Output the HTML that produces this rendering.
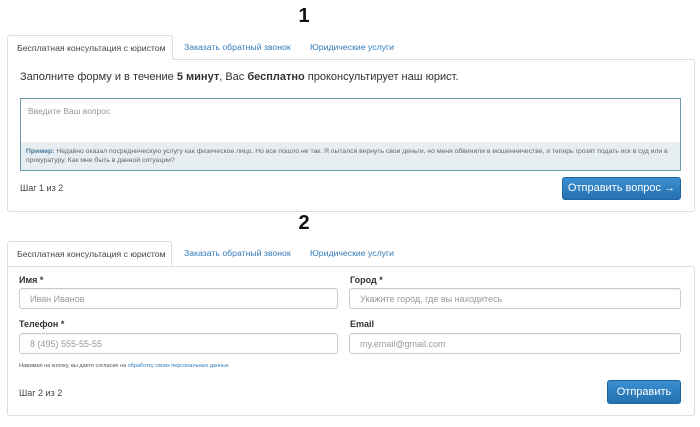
<!DOCTYPE html>
<html><head><meta charset="utf-8"><style>
*{box-sizing:border-box;margin:0;padding:0}
body{width:700px;height:427px;background:#fff;font-family:"Liberation Sans",sans-serif;position:relative;overflow:hidden;color:#333}
.a{position:absolute;white-space:nowrap}
.num{font-weight:bold;font-size:20px;color:#111;width:700px;text-align:center;left:-46px}
.tab{font-size:8.7px;color:#337ab7;top:0;height:25px;line-height:24px}
.tab.act{color:#444;border:1px solid #ddd;border-bottom:1px solid #fff;background:#fff;border-radius:3px 3px 0 0;z-index:2}
.panel{border:1px solid #ddd;border-radius:0 3px 3px 3px;background:#fff}
.btn{background:linear-gradient(#3a8fd0,#2670b0);border:1px solid #2165a0;border-radius:3px;color:#fff;font-size:11px;text-align:center}
.lab{font-size:9px;font-weight:bold;color:#333}
.inp{border:1px solid #ccc;border-radius:3px;height:21px;font-size:9px;color:#999;padding:5px 10px;box-shadow:inset 0 1px 1px rgba(0,0,0,.06)}
</style></head><body>
<div class="a num" style="top:5px">1</div>
<div class="a panel" style="left:7px;top:59px;width:688px;height:153px"></div>
<div class="a tab act" style="left:7px;top:35px;width:166px;padding-left:9px">Бесплатная консультация с юристом</div>
<div class="a tab" style="left:184px;top:35px">Заказать обратный звонок</div>
<div class="a tab" style="left:310px;top:35px">Юридические услуги</div>
<div class="a" style="left:20px;top:71px;font-size:11px;color:#333">Заполните форму и в течение <b>5 минут</b>, Вас <b>бесплатно</b> проконсультирует наш юрист.</div>
<div class="a" style="left:20px;top:98px;width:661px;height:73px;border:1px solid #6a9aa8;background:#e6eef2;white-space:normal">
<div style="background:#fff;height:43px;padding:7px 7px;font-size:8.5px;color:#999">Введите Ваш вопрос</div>
<div style="padding:5px 5px;font-size:6.8px;line-height:9px;color:#666"><b style="color:#4a7a9a">Пример:</b> Недавно оказал посредническую услугу как физическое лицо. Но все пошло не так. Я пытался вернуть свои деньги, но меня обвинили в мошенничестве, и теперь грозят подать иск в суд или в прокуратуру. Как мне быть в данной ситуации?</div>
</div>
<div class="a" style="left:20px;top:183px;font-size:9px;color:#444">Шаг 1 из 2</div>
<div class="a btn" style="left:562px;top:177px;width:119px;height:23px;line-height:21px">Отправить вопрос →</div>

<div class="a num" style="top:212px">2</div>
<div class="a panel" style="left:7px;top:266px;width:688px;height:150px"></div>
<div class="a tab act" style="left:7px;top:241px;width:165px;padding-left:9px">Бесплатная консультация с юристом</div>
<div class="a tab" style="left:184px;top:241px">Заказать обратный звонок</div>
<div class="a tab" style="left:310px;top:241px">Юридические услуги</div>
<div class="a lab" style="left:19px;top:275px">Имя *</div>
<div class="a lab" style="left:350px;top:275px">Город *</div>
<div class="a inp" style="left:19px;top:288px;width:319px">Иван Иванов</div>
<div class="a inp" style="left:349px;top:288px;width:332px">Укажите город, где вы находитесь</div>
<div class="a lab" style="left:19px;top:319px">Телефон *</div>
<div class="a lab" style="left:350px;top:319px">Email</div>
<div class="a inp" style="left:19px;top:333px;width:319px">8 (495) 555-55-55</div>
<div class="a inp" style="left:349px;top:333px;width:332px">my.email@gmail.com</div>
<div class="a" style="left:19px;top:363px;font-size:5.5px;color:#555">Нажимая на кнопку, вы даете согласие на <span style="color:#337ab7">обработку своих персональных данных</span></div>
<div class="a" style="left:19px;top:388px;font-size:9px;color:#444">Шаг 2 из 2</div>
<div class="a btn" style="left:607px;top:380px;width:74px;height:24px;line-height:22px">Отправить</div>
</body></html>
